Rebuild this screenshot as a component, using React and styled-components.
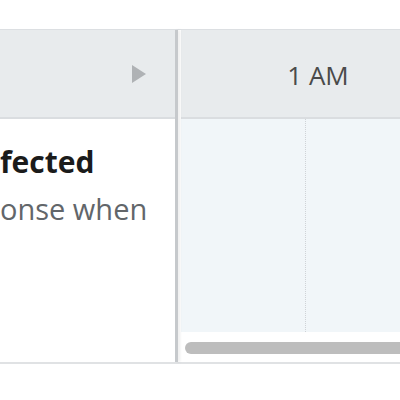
import React from 'react'
import styled, { createGlobalStyle } from 'styled-components'

const GlobalStyle = createGlobalStyle`
  html, body {
    margin: 0;
    padding: 0;
    background: #ffffff;
    font-family: 'Open Sans', 'Liberation Sans', sans-serif;
  }
`

const Page = styled.div`
  width: 400px;
  height: 400px;
  overflow: hidden;
  padding-top: 29px;
  box-sizing: border-box;
`

const Timeline = styled.div`
  display: flex;
  height: 335px;
  border-top: 1px solid #dcdfe2;
  border-bottom: 2px solid #e0e2e4;
  box-sizing: border-box;
`

const LeftPane = styled.div`
  width: 175px;
  flex-shrink: 0;
  display: flex;
  flex-direction: column;
  overflow: hidden;
`

const Divider = styled.div`
  width: 3px;
  flex-shrink: 0;
  background: #c6c9cc;
  box-shadow: 2px 0 3px rgba(0, 0, 0, 0.08);
  z-index: 1;
`

const RightPane = styled.div`
  flex: 1;
  display: flex;
  flex-direction: column;
  overflow: hidden;
  padding-left: 3px;
`

const Header = styled.div`
  height: 89px;
  flex-shrink: 0;
  background: #e8ebed;
  border-bottom: 2px solid #dadde0;
  display: flex;
  align-items: center;
  justify-content: ${p => (p.$end ? 'flex-end' : 'flex-start')};
  padding-right: ${p => (p.$end ? '29px' : '0')};
  box-sizing: border-box;
`

const PlayArrow = styled.span`
  width: 0;
  height: 0;
  border-top: 9.5px solid transparent;
  border-bottom: 9.5px solid transparent;
  border-left: 14px solid #afb2b5;
`

const LeftBody = styled.div`
  flex: 1;
  background: #ffffff;
  padding-top: 26px;
`

const Title = styled.div`
  font-size: 30px;
  line-height: 34px;
  font-weight: 700;
  color: #1b1b1b;
  white-space: nowrap;
`

const Description = styled.div`
  margin-top: 14px;
  font-size: 29px;
  line-height: 32px;
  color: #62666a;
  white-space: nowrap;
`

const HourCell = styled.div`
  width: 274px;
  flex-shrink: 0;
  text-align: center;
  font-size: 26px;
  color: #4a4a4a;
  padding-top: 2px;
`

const Grid = styled.div`
  flex: 1;
  display: flex;
  background: #f1f6f9;
`

const Slot = styled.div`
  width: 125px;
  flex-shrink: 0;
  border-right: 1px dotted #cfd3d7;
  box-sizing: border-box;
`

const ScrollTrack = styled.div`
  height: 30px;
  flex-shrink: 0;
  background: #ffffff;
  padding: 10px 0 0 4px;
  box-sizing: border-box;
`

const ScrollThumb = styled.div`
  width: 400px;
  height: 12px;
  border-radius: 6px;
  background: #bdbdbd;
`

export default function App() {
  return (
    <Page>
      <GlobalStyle />
      <Timeline>
        <LeftPane>
          <Header $end>
            <PlayArrow />
          </Header>
          <LeftBody>
            <Title>fected</Title>
            <Description>onse when</Description>
          </LeftBody>
        </LeftPane>
        <Divider />
        <RightPane>
          <Header>
            <HourCell>1 AM</HourCell>
          </Header>
          <Grid>
            <Slot />
            <Slot />
          </Grid>
          <ScrollTrack>
            <ScrollThumb />
          </ScrollTrack>
        </RightPane>
      </Timeline>
    </Page>
  )
}
